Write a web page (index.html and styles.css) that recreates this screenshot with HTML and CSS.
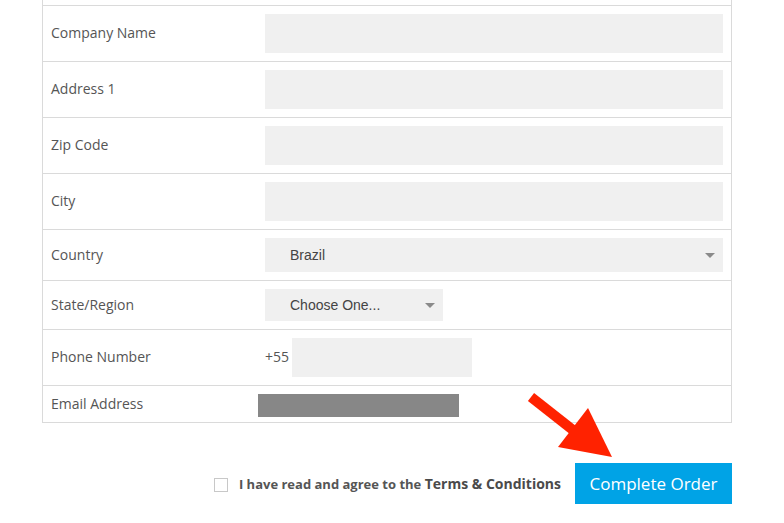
FILE: index.html
```html
<!DOCTYPE html>
<html>
<head>
<meta charset="utf-8">
<link rel="stylesheet" href="styles.css">
</head>
<body>
<div class="page">
  <div class="form-table">
    <div class="row">
      <div class="label">Company Name</div>
      <div class="field"><div class="input"></div></div>
    </div>
    <div class="row">
      <div class="label">Address 1</div>
      <div class="field"><div class="input"></div></div>
    </div>
    <div class="row">
      <div class="label">Zip Code</div>
      <div class="field"><div class="input"></div></div>
    </div>
    <div class="row">
      <div class="label">City</div>
      <div class="field"><div class="input"></div></div>
    </div>
    <div class="row row-select">
      <div class="label">Country</div>
      <div class="field"><div class="select select-wide"><span>Brazil</span><i class="caret"></i></div></div>
    </div>
    <div class="row row-select">
      <div class="label">State/Region</div>
      <div class="field"><div class="select select-narrow"><span>Choose One...</span><i class="caret"></i></div></div>
    </div>
    <div class="row">
      <div class="label">Phone Number</div>
      <div class="field phone"><span class="prefix">+55</span><div class="input input-phone"></div></div>
    </div>
    <div class="row row-email">
      <div class="label">Email Address</div>
      <div class="field"><div class="redacted"></div></div>
    </div>
  </div>

  <div class="actions">
    <label class="agree">
      <span class="checkbox"></span>
      <span class="agree-text">I have read and agree to the <strong>Terms &amp; Conditions</strong></span>
    </label>
    <button class="btn">Complete Order</button>
  </div>

  <svg class="arrow" width="784" height="523" viewBox="0 0 784 523">
    <line x1="531" y1="397" x2="578" y2="434" stroke="#ff2200" stroke-width="10"/>
    <polygon points="558,447 588,408 612,457" fill="#ff2200"/>
  </svg>
</div>
</body>
</html>
```

FILE: styles.css
```css
* { box-sizing: border-box; }
html, body { margin: 0; padding: 0; background: #fff; }
body { font-family: "Open Sans", "Liberation Sans", sans-serif; color: #555; }

.page { position: relative; width: 784px; height: 523px; overflow: hidden; }

.form-table {
  margin-left: 42px;
  width: 690px;
  padding-top: 5px;
  border-left: 1px solid #dadada;
  border-right: 1px solid #dadada;
  border-bottom: 1px solid #dadada;
}

.row {
  display: flex;
  align-items: center;
  border-top: 1px solid #dadada;
  padding: 8px 7px 8px 8px;
}

.label {
  width: 214px;
  flex: none;
  font-size: 14px;
  color: #555;
  margin-top: -3px;
}
.row-select .label { margin-top: -1px; }
.row-email .label { margin-top: -4px; }

.field { flex: 1; display: flex; align-items: center; }

.input { height: 39px; width: 458px; background: #f0f0f0; }

.select {
  position: relative;
  display: flex;
  align-items: center;
  background: #f0f0f0;
  font-family: "Liberation Sans", Arial, sans-serif;
  font-size: 14px;
  color: #444;
  padding-left: 25px;
}
.select-wide { width: 458px; height: 34px; }
.select-narrow { width: 178px; height: 32px; }

.caret {
  position: absolute;
  top: 50%;
  margin-top: -2px;
  width: 0; height: 0;
  border-left: 5px solid transparent;
  border-right: 5px solid transparent;
  border-top: 5px solid #8a8a8a;
}
.select-wide .caret { right: 8px; }
.select-narrow .caret { right: 8px; }

.prefix { font-size: 14px; color: #555; width: 27px; margin-top: -2px; }
.input-phone { width: 180px; }

.row-email { padding-bottom: 5px; }
.redacted { height: 23px; width: 201px; background: #878787; margin-left: -7px; }

.actions {
  display: flex;
  align-items: center;
  justify-content: flex-end;
  width: 732px;
  margin-top: 40px;
}

.agree { display: flex; align-items: center; margin-right: 14px; }
.checkbox {
  width: 14px; height: 14px;
  border: 1px solid #c8c8c8;
  background: #fff;
  margin-right: 11px;
  margin-left: -2px;
  margin-top: 2px;
}
.agree-text { font-size: 13px; font-weight: 700; color: #555; margin-top: -1px; }
.agree-text strong { font-size: 14px; font-weight: 700; color: #4a4a4a; }

.btn {
  width: 157px;
  height: 41px;
  border: 0;
  background: #00a3e6;
  color: #fff;
  font-family: "Open Sans", sans-serif;
  font-size: 17px;
  padding: 0;
}

.arrow { position: absolute; left: 0; top: 0; pointer-events: none; }
```
